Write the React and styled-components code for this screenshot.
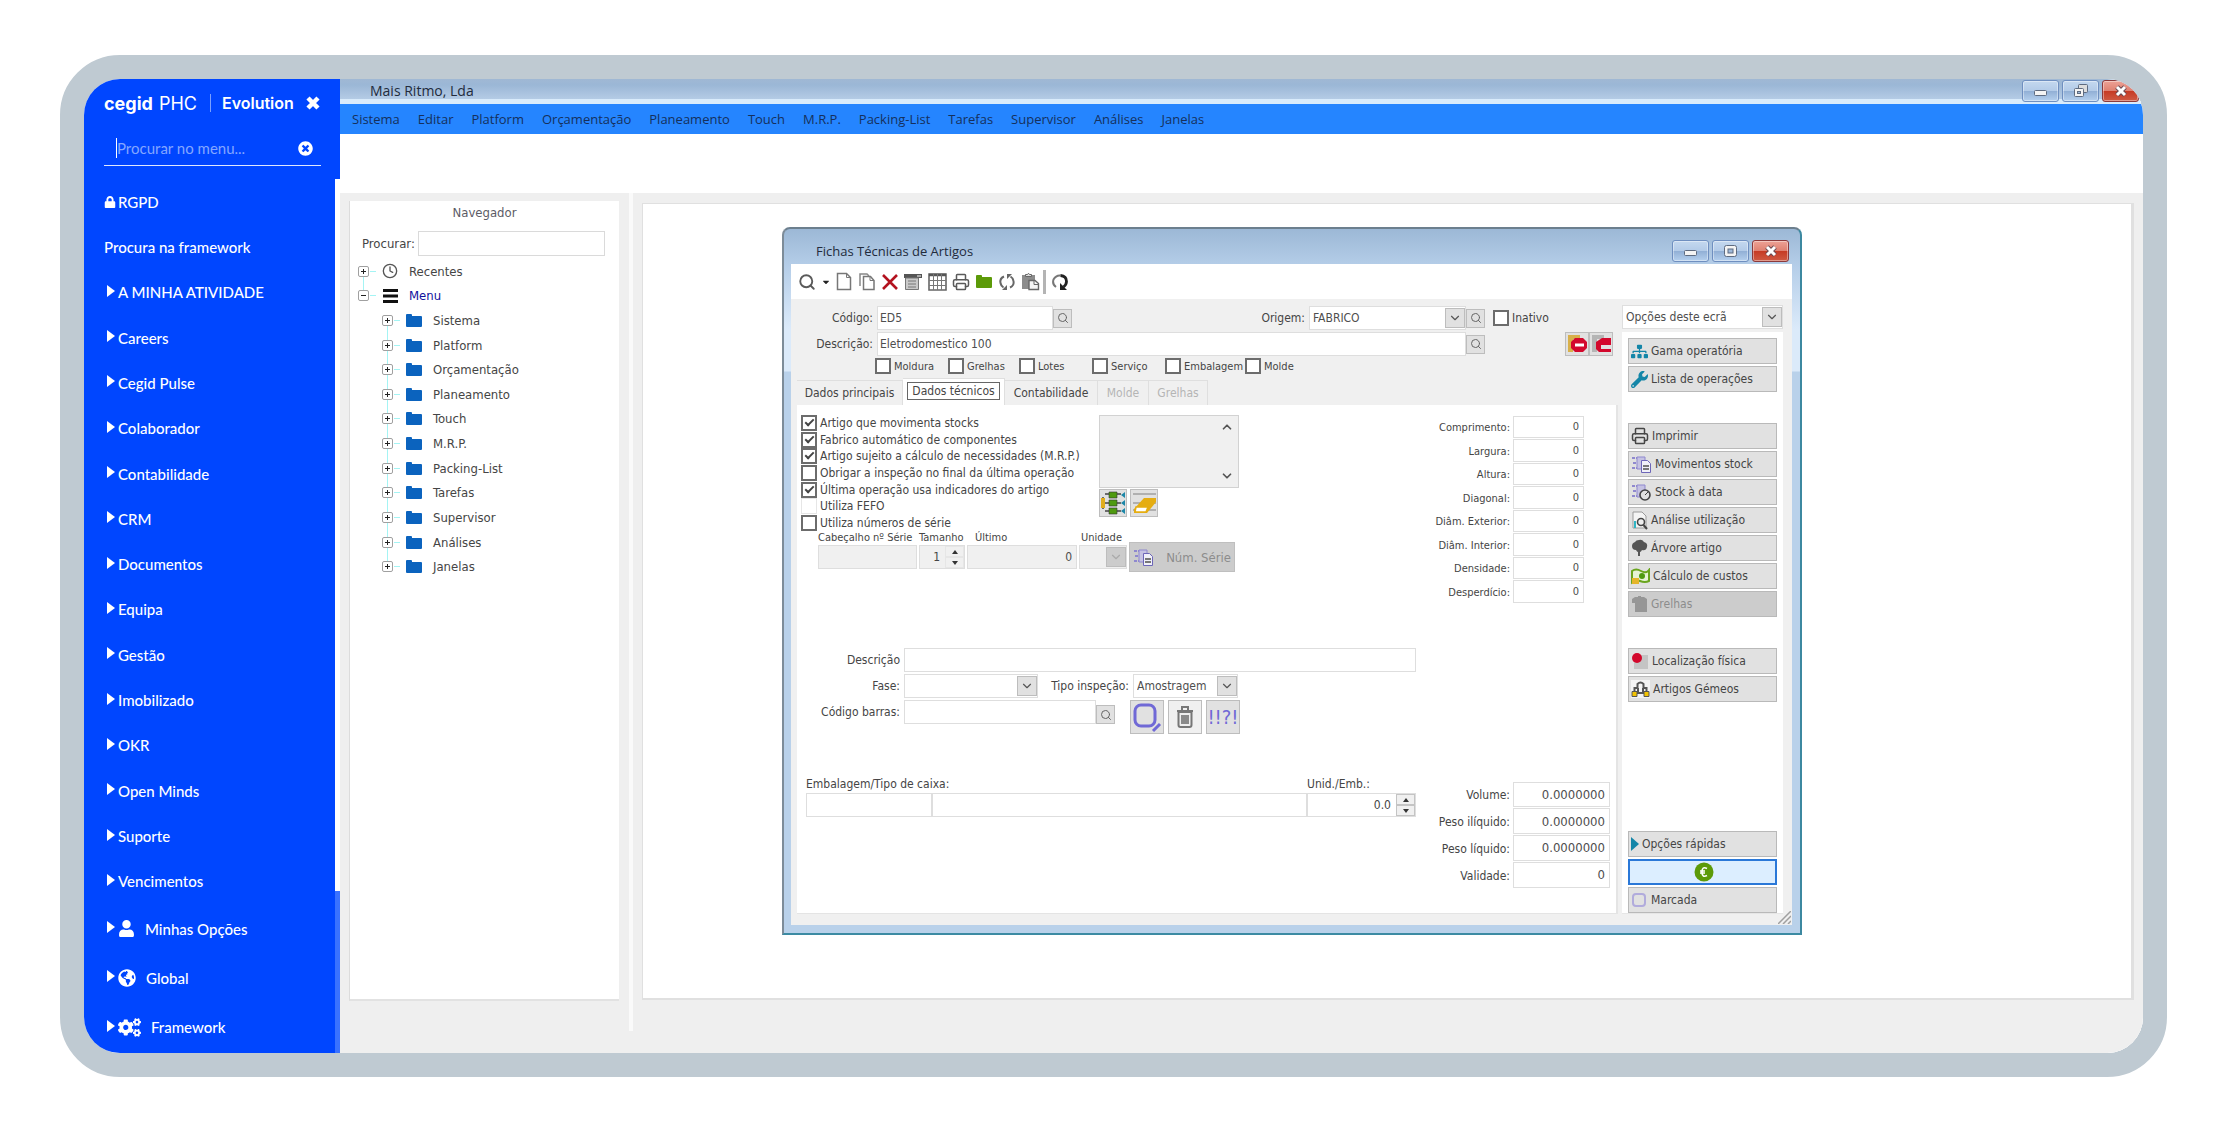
import { Fragment, useState } from "react";
import styled, { createGlobalStyle, css } from "styled-components";
import {
    FaLock, FaTimesCircle, FaUser, FaGlobeAmericas, FaCogs,
    FaSitemap, FaWrench, FaCaretDown
} from "react-icons/fa";
import { Search, Printer, Clock, ChevronDown, ChevronUp } from "lucide-react";

const GlobalStyle = createGlobalStyle`
    *, *::before, *::after{
        box-sizing: border-box;
    }

    body{
        margin: 0;
        background: #fff;
        font-family: "DejaVu Sans Condensed", "DejaVu Sans", sans-serif;
        font-size: 13px;
        color: #454545;
    }

    button, input, select, textarea{
        font: inherit;
        color: inherit;
        margin: 0;
        padding: 0;
        border: 0;
        border-radius: 0;
        background: none;
    }

    ul{
        list-style: none;
        margin: 0;
        padding: 0;
    }

    svg{
        display: block;
        flex-shrink: 0;
    }
`;

/* ---------- frame ---------- */

const Page = styled.div`
    display: flex;
    min-height: 100vh;
    padding: 55px 61px 55px 60px;
`;

const Frame = styled.div`
    flex: 1;
    display: flex;
    border: 24px solid #bfcad2;
    border-radius: 60px;
    overflow: hidden;
    min-width: 0;
`;

/* ---------- side menu ---------- */

const Side = styled.aside`
    flex: 0 0 256px;
    min-width: 0;
    display: flex;
    flex-direction: column;
    background: #0046ff;
    color: #fff;
    font-family: Lato, sans-serif;
`;

const SideHead = styled.div`
    height: 100px;
    padding: 8px 14px 0 20px;
`;

const Brand = styled.div`
    display: flex;
    align-items: center;
    height: 32px;
    font-family: Inter, sans-serif;
    font-size: 18px;
    font-weight: 400;

    b{
        font-weight: 700;
        margin-right: 6px;
    }
`;

const Product = styled.span`
    margin-left: 13px;
    padding: 0 12px 0 11px;
    border-left: 1px solid #7aa0ff;
    font-size: 16px;
    font-weight: 600;
    line-height: 18px;
`;

const IconButton = styled.button.attrs({type: 'button'})`
    display: flex;
    color: #fff;
`;

const SideSearch = styled.div`
    display: flex;
    align-items: center;
    justify-content: space-between;
    height: 35px;
    margin-top: 12px;
    margin-right: 5px;
    padding: 0 8px 0 12px;
    border-bottom: 1px solid #dfe8ff;

    input{
        flex: 1;
        min-width: 0;
        height: 20px;
        border-left: 1px solid #fff;
        font-size: 15px;
        outline: none;
    }

    input::placeholder{
        color: #84a6ff;
    }
`;

const SideBody = styled.div`
    flex: 1;
    display: flex;
`;

const SideList = styled.ul`
    flex: 1;
    display: grid;
    grid-template-rows: repeat(16, 45fr) repeat(3, 49fr);
    max-height: 873px;
`;

const SideItem = styled.li`
    display: flex;
    align-items: center;
    padding-left: ${({plain}) => plain ? 20 : 23}px;
`;

const SideLink = styled.a`
    display: flex;
    align-items: center;
    column-gap: ${({wide}) => wide ? 10 : 2}px;
    color: inherit;
    font-size: 15px;
    font-weight: 500;
    text-decoration: none;
`;

const Arrow = styled.span`
    margin: 0 3px 3px 0;
    border-left: 8px solid #fff;
    border-top: 6px solid transparent;
    border-bottom: 6px solid transparent;
`;

const SideScroll = styled.div`
    width: 5px;
    background: linear-gradient(#fff 712px, #3a72ff 712px);
`;

/* ---------- main application ---------- */

const Main = styled.main`
    flex: 1;
    min-width: 0;
    display: flex;
    flex-direction: column;
    background: #fff;
`;

const TitleBar = styled.header`
    display: flex;
    align-items: center;
    justify-content: space-between;
    height: 25px;
    padding: 3px 4px 0 30px;
    border-bottom: 5px solid #d9ebfb;
    background: linear-gradient(#a0b8d4, #9bb7d6 30%, #b4cbe5);
    font-family: "Open Sans", sans-serif;
    font-size: 14px;
    color: #222b3c;
`;

const WinButtons = styled.div`
    display: flex;
    column-gap: 3px;
`;

const WinButton = styled.button.attrs({type: 'button'})`
    display: flex;
    align-items: center;
    justify-content: center;
    width: 37px;
    height: 22px;
    border: 1px solid ${({close}) => close ? '#8b3a3c' : '#6f8fc0'};
    border-radius: 3px;
    background: ${({close}) => close
        ? 'linear-gradient(#eda295, #df8172 48%, #c63b25 52%, #cf5a43)'
        : 'linear-gradient(#c4d8ef, #b3cbe8 48%, #92b0d6 52%, #b5d0ee)'};
    box-shadow: inset 0 0 0 1px rgba(255, 255, 255, .4);
`;

const MenuBar = styled.nav`
    display: flex;
    align-items: center;
    column-gap: 18px;
    height: 30px;
    padding-left: 12px;
    background: #2585ff;
    font-family: "Open Sans", sans-serif;
    font-size: 13px;

    a{
        color: #15305c;
        text-decoration: none;
    }
`;

const ToolStrip = styled.div`
    height: 59px;
`;

const Desk = styled.div`
    flex: 1;
    display: flex;
    background: #efefef;
`;

const Navigator = styled.section`
    width: 270px;
    margin: 8px 0 52px 9px;
    border-left: 1px solid #dcdcdc;
    border-bottom: 2px solid #e2e2e2;
    background: #fff;
`;

const NavTitle = styled.h2`
    margin: 0;
    font-size: 13px;
    font-weight: 400;
    line-height: 24px;
    text-align: center;
    color: #5c5c66;
`;

const NavSearch = styled.div`
    display: flex;
    align-items: center;
    column-gap: 3px;
    padding: 6px 14px 3px 12px;

    input{
        flex: 1;
        min-width: 0;
        height: 25px;
        border: 1px solid #dadada;
    }
`;

const Tree = styled.ul`
    display: grid;
    grid-template-rows: repeat(13, 1fr);
    height: 320px;
    padding-left: 8px;
`;

const TreeRow = styled.li`
    display: grid;
    grid-template-columns: 12px 6px 28px 1fr;
    align-items: center;
    padding-left: ${({level}) => level ? 24 : 0}px;
    color: ${({active}) => active ? '#10109c' : 'inherit'};

    svg{
        justify-self: center;
    }
`;

const TreeName = styled.span`
    padding-left: 5px;
`;

const Expander = styled.button.attrs({type: 'button'})`
    position: relative;
    width: 11px;
    height: 11px;
    border: 1px solid #a0a0a0;
    border-radius: 2px;
    background:
        linear-gradient(#222, #222) center / 5px 1px no-repeat,
        linear-gradient(#222, #222) center / ${({open}) => open ? '0 0' : '1px 5px'} no-repeat,
        #fff;

    /* tree guide running down to the next row */
    &::after{
        content: "";
        position: absolute;
        display: ${({last}) => last ? 'none' : 'block'};
        left: 4px;
        top: 10px;
        width: 1px;
        height: 14px;
        background: #a4f4f4;
    }
`;

const Guide = styled.span`
    width: 6px;
    height: 1px;
    background: #a4f4f4;
`;

const Splitter = styled.div`
    width: 4px;
    margin: 0 9px 22px 10px;
    background: #fafafa;
`;

const Workspace = styled.div`
    position: relative;
    flex: 1;
    margin: 10px 9px 53px 0;
    border: 1px solid #e0e0e0;
    border-right-width: 3px;
    border-bottom-width: 2px;
    background: #fff;
`;

/* ---------- MDI window ---------- */

const Window = styled.section`
    position: absolute;
    left: 139px;
    top: 23px;
    width: 1020px;
    height: 708px;
    display: flex;
    flex-direction: column;
    padding: 0 8px 8px 7px;
    border: 2px solid #5d7586;
    border-color: #6c7f8e #3c88a0 #3c8ba3 #7d8c99;
    border-radius: 8px 8px 0 0;
    background: linear-gradient(#9cb8d6, #b4cde8 36px, #dbeafa 100px, #dbeafa 142px, #b9d1ea 143px);
    font-size: 12px;
`;

const WindowTitle = styled.div`
    display: flex;
    align-items: center;
    justify-content: space-between;
    height: 35px;
    padding: 8px 3px 0 25px;
    font-family: "Open Sans", sans-serif;
    color: #222b3c;

    h1{
        margin: 0;
        font-size: 13px;
        font-weight: 400;
    }
`;

const Toolbar = styled.div`
    display: flex;
    align-items: center;
    column-gap: 5px;
    height: 35px;
    padding-left: 7px;
    background: #fff;

    button{
        display: flex;
        color: #5a5a5a;
    }
`;

const ToolSeparator = styled.span`
    width: 3px;
    height: 24px;
    margin: 0 0 0 -2px;
    background: #b4b4b4;
`;

const WindowBody = styled.div`
    flex: 1;
    display: flex;
    column-gap: 4px;
    padding: 6px 9px 11px 6px;
    background: #f0f0f0;
`;

const FormSide = styled.div`
    flex: 1;
    display: flex;
    flex-direction: column;
`;

const HeadRow = styled.div`
    display: flex;
    align-items: center;
    height: 26px;
`;

const HeadLabel = styled.label`
    width: ${({width}) => width}px;
    padding-right: 4px;
    text-align: right;
`;

const TextInput = styled.input`
    width: ${({width}) => width ? width + 'px' : 'auto'};
    flex: ${({width}) => width ? '0 0 auto' : '1'};
    min-width: 0;
    height: 24px;
    padding: 0 4px 0 2px;
    border: 1px solid #dedede;
    background: ${({disabled}) => disabled ? '#f0f0f0' : '#fff'};
    text-align: ${({number}) => number ? 'right' : 'left'};
    color: #4e4e4e;
`;

const SquareButton = styled.button.attrs({type: 'button'})`
    display: flex;
    align-items: center;
    justify-content: center;
    width: ${({size}) => size || 19}px;
    height: ${({size}) => size || 19}px;
    border: 1px solid #bdbdbd;
    background: ${({light}) => light ? '#f0f0f0' : '#e1e1e1'};
    color: #666;
`;

const SelectBox = styled.div`
    display: grid;
    grid-template-columns: 1fr 20px;
    align-items: center;
    width: ${({width}) => width ? width + 'px' : 'auto'};
    height: 24px;
    border: 1px solid #dedede;
    background: ${({off}) => off ? '#f0f0f0' : '#fff'};

    select{
        grid-area: 1 / 1 / 2 / 3;
        width: 100%;
        height: 22px;
        padding-left: 3px;
        appearance: none;
        opacity: 1;
        color: #4e4e4e;
    }
`;

const SelectArrow = styled.span`
    grid-area: 1 / 2;
    display: flex;
    align-items: center;
    justify-content: center;
    height: 20px;
    border: 1px solid #bdbdbd;
    background: ${({off}) => off ? '#ccc' : '#e1e1e1'};
    color: ${({off}) => off ? '#aaa' : '#555'};
    pointer-events: none;
`;

const Check = styled.label`
    display: flex;
    align-items: center;
    column-gap: 3px;
    font-size: ${({small}) => small ? 11 : 12}px;
    white-space: nowrap;

    input{
        display: grid;
        place-items: center;
        flex: 0 0 auto;
        width: 16px;
        height: 16px;
        appearance: none;
        border: 2px solid #6c6c6c;
        background: #fff;
    }

    input:disabled{
        border: 1px solid #e6e6e6;
    }

    input:checked::after{
        content: "";
        width: 9px;
        height: 5px;
        margin-top: -3px;
        border: solid #444;
        border-width: 0 0 2px 2px;
        transform: rotate(-45deg);
    }
`;

const Inactive = styled(Check)`
    margin-left: 8px;
`;

const StopButtons = styled.div`
    display: flex;
    margin-left: auto;
    margin-right: 5px;
`;

const CheckRow = styled.div`
    display: grid;
    grid-template-columns: 73px 71px 73px 73px 80px 60px;
    align-items: center;
    height: 18px;
    margin: 0 0 3px 78px;
`;

const Tabs = styled.div`
    display: flex;
    align-items: flex-end;
    height: 27px;
`;

const Tab = styled.button.attrs({type: 'button', role: 'tab'})`
    width: ${({width}) => width}px;
    height: 25px;
    border: 1px solid #dfdfdf;
    border-width: 1px 1px 0 0;
    white-space: nowrap;

    &:disabled{
        color: #b5b5b5;
    }

    ${({active}) => active && css`
        height: 27px;
        padding: 3px 4px 5px;
        background: #fff;

        span{
            display: block;
            border: 1px solid #666;
            line-height: 16px;
        }
    `}
`;

const Panel = styled.div`
    flex: 1;
    display: flex;
    justify-content: space-between;
    padding: 10px 3px 25px 4px;
    border-right: 2px solid #e4e4e4;
    border-bottom: 1px solid #e4e4e4;
    background: #fff;
`;

const PanelLeft = styled.div`
    width: 615px;
    display: flex;
    flex-direction: column;
`;

const StockTop = styled.div`
    display: grid;
    grid-template-columns: 298px 140px;
    height: 116px;
`;

const CheckList = styled.div`
    display: grid;
    grid-template-rows: repeat(7, 1fr);
    height: 116px;
`;

const NoteBox = styled.div`
    display: flex;
    height: 73px;
    border: 1px solid #d2d2d2;
    background: #f0f0f0;

    textarea{
        flex: 1;
        min-width: 0;
        resize: none;
    }
`;

const NoteScroll = styled.div`
    display: flex;
    flex-direction: column;
    justify-content: space-between;
    width: 21px;
    padding: 4px 3px;
    color: #555;
`;

const ButtonPair = styled.div`
    display: flex;
    column-gap: 3px;
    margin-top: 1px;
`;

const SeriesRow = styled.div`
    display: flex;
    height: 38px;
    padding-left: 17px;
`;

const SeriesField = styled.div`
    display: grid;
    grid-template-rows: 14px 24px;
    width: ${({width}) => width}px;
    margin-right: 2px;

    label{
        font-size: 11px;
        line-height: 14px;
        padding-left: ${({inset}) => inset || 0}px;
        white-space: nowrap;
    }

    input{
        width: 100%;
    }
`;

const Spin = styled.div`
    display: flex;
    height: 24px;
    border: 1px solid #dedede;
    background: ${({off}) => off ? '#f0f0f0' : '#fff'};

    input{
        flex: 1;
        min-width: 0;
        height: 22px;
        padding-right: 5px;
        text-align: right;
    }
`;

const SpinButtons = styled.div`
    display: grid;
    grid-template-rows: 1fr 1fr;
    width: 19px;
    color: #333;

    button{
        display: grid;
        place-items: center;
        border: 1px solid ${({off}) => off ? '#e6e6e6' : '#c4c4c4'};
        background: #f0f0f0;
    }
`;

const SeriesButton = styled.button.attrs({type: 'button'})`
    display: flex;
    align-items: center;
    justify-content: space-between;
    width: 106px;
    height: 30px;
    margin-top: 11px;
    padding: 0 3px;
    border: 1px solid #bfbfbf;
    background: #ccc;
    font-size: 13px;

    &:disabled{
        color: #8c8c8c;
    }
`;

const InspectionGroup = styled.div`
    display: grid;
    row-gap: 1px;
    margin-top: 79px;
`;

const FieldRow = styled.div`
    display: flex;
    align-items: flex-start;
    min-height: 25px;

    > label{
        width: ${({labelWidth}) => labelWidth || 103}px;
        padding-right: 4px;
        line-height: 24px;
        text-align: right;
        white-space: nowrap;
    }
`;

const LookupField = styled.div`
    display: flex;
    align-items: flex-end;
`;

const ActionButtons = styled.div`
    display: flex;
    column-gap: 4px;
    margin-left: 15px;
`;

const MarkButton = styled(SquareButton)`
    font-size: 20px;
    color: #7069d6;
`;

const BoxGroup = styled.div`
    display: grid;
    grid-template-columns: 126px 375px 109px;
    margin-top: auto;
    padding: 0 0 71px 5px;

    label{
        line-height: 17px;
        white-space: nowrap;
    }

    label:first-child{
        grid-column: 1 / 3;
    }
`;

const PanelRight = styled.div`
    width: 184px;
    display: flex;
    flex-direction: column;
    justify-content: space-between;
`;

const Measures = styled.div`
    display: grid;
    grid-template-columns: 84px ${({inputWidth}) => inputWidth}px;
    grid-template-rows: repeat(${({rows}) => rows}, 1fr);
    align-items: center;
    height: ${({height}) => height}px;
    font-size: ${({small}) => small ? 11 : 12}px;

    label{
        padding: 2px 3px 0 0;
        text-align: right;
        white-space: nowrap;
    }

    input{
        height: calc(100% - 1px);
        font-size: ${({small}) => small ? 11 : 13}px;
    }
`;

/* ---------- options column ---------- */

const Options = styled.div`
    width: 161px;
    display: flex;
    flex-direction: column;
`;

const OptionList = styled.div`
    flex: 1;
    display: flex;
    flex-direction: column;
    row-gap: 2px;
    margin-top: 3px;
    padding: 6px 6px 0 6px;
    background: #fff;
    border-bottom: 1px solid #e6e6e6;
`;

const OptionButton = styled.button.attrs({type: 'button'})`
    display: flex;
    align-items: center;
    justify-content: ${({primary}) => primary ? 'center' : 'flex-start'};
    column-gap: 3px;
    height: 26px;
    padding-left: 2px;
    border: ${({primary}) => primary ? '2px solid #2a78d8' : '1px solid #b9b9b9'};
    background: ${({primary}) => primary ? '#dceeff' : '#e1e1e1'};
    white-space: nowrap;

    &:disabled{
        background: #ccc;
        color: #8c8c8c;
    }
`;

const OptionSpace = styled.div`
    flex: ${({grow}) => grow ? '1' : '0 0 27px'};
`;

const Grip = styled.svg`
    position: absolute;
    right: 9px;
    bottom: 9px;
`;

/* ---------- small drawings ---------- */

const CrossIcon = () => (
    <svg width="14" height="14" viewBox="0 0 14 14">
        <path d="M2 2 12 12M12 2 2 12" stroke="#fff" strokeWidth="4.5" />
    </svg>
);

const MinimizeIcon = () => (
    <svg width="15" height="12" viewBox="0 0 15 12">
        <rect x="1.5" y="5.5" width="12" height="5" rx="1" fill="#f4f4f4" stroke="#5e6b80" />
    </svg>
);

const MaximizeIcon = () => (
    <svg width="15" height="14" viewBox="0 0 15 14">
        <rect x="1.5" y="1.5" width="12" height="11" rx="2" fill="#f4f4f4" stroke="#5e6b80" />
        <rect x="5" y="5" width="5" height="4" fill="#9db8d9" stroke="#5e6b80" />
    </svg>
);

const RestoreIcon = () => (
    <svg width="18" height="15" viewBox="0 0 18 15">
        <rect x="6.5" y="1.5" width="9" height="8" rx="1" fill="#ddd" stroke="#5e6b80" />
        <rect x="2.5" y="5.5" width="9" height="8" rx="1" fill="#f4f4f4" stroke="#5e6b80" />
        <rect x="5.5" y="8.5" width="3" height="2" fill="#9db8d9" stroke="#5e6b80" />
    </svg>
);

const CloseIcon = () => (
    <svg width="14" height="12" viewBox="0 0 14 12">
        <path d="M3 2 11 10M11 2 3 10" stroke="#6b4a52" strokeWidth="5" />
        <path d="M3 2 11 10M11 2 3 10" stroke="#fff" strokeWidth="3" />
    </svg>
);

const MenuIcon = () => (
    <svg width="15" height="14" viewBox="0 0 15 14">
        <path d="M0 1.5h15M0 7h15M0 12.5h15" stroke="#111" strokeWidth="3" />
    </svg>
);

const FolderIcon = ({color = '#0b63be'}) => (
    <svg width="18" height="15" viewBox="0 0 18 15">
        <path d="M1 2q0-1 1-1h4q1 0 1 1v1h9q1 0 1 1v9q0 1-1 1H2q-1 0-1-1z" fill={color} />
    </svg>
);

const FileIcon = () => (
    <svg width="17" height="19" viewBox="0 0 17 19">
        <path d="M1.500 1.500h9l4 4v12h-13z" fill="#fff" stroke="#777" strokeWidth="1.5" />
        <path d="M10.500 1.500v4h4" fill="none" stroke="#777" />
    </svg>
);

const CopyIcon = () => (
    <svg width="18" height="19" viewBox="0 0 18 19">
        <path d="M2 14V2h7l2 2" fill="none" stroke="#888" strokeWidth="1.5" />
        <path d="M5.500 4.500h7l3.500 4v9H5.500z" fill="#fff" stroke="#777" strokeWidth="1.5" />
        <path d="M12 4.500v4h4" fill="none" stroke="#777" />
    </svg>
);

const DeleteIcon = () => (
    <svg width="18" height="18" viewBox="0 0 18 18">
        <path d="M2 2 16 16M16 2 2 16" stroke="#b3121f" strokeWidth="2.6" />
    </svg>
);

const FormIcon = () => (
    <svg width="19" height="18" viewBox="0 0 19 18">
        <path d="M0 1h18v4H0z" fill="#555" />
        <path d="M1.500 5h13v11.500h-13z" fill="#c9c9c9" stroke="#777" />
        <path d="M4 8h8M4 11h8M4 14h8" stroke="#777" />
        <path d="M13 3h4" stroke="#fff" />
    </svg>
);

const GridIcon = () => (
    <svg width="19" height="18" viewBox="0 0 19 18">
        <path d="M1 1h17v16H1z" fill="#fff" stroke="#666" strokeWidth="1.6" />
        <path d="M1 2h17" stroke="#555" strokeWidth="2.5" />
        <path d="M1 7.500h17M1 12.500h17M5.500 1v16M9.500 1v16M13.500 1v16" stroke="#777" />
    </svg>
);

const SyncIcon = () => (
    <svg width="18" height="18" viewBox="0 0 18 18">
        <path d="M6 3.500Q1.500 5.500 2.500 10q.5 3 3 4.500M12 14.500q4.500-2 3.500-6.500-.5-3-3-4.500" fill="none" stroke="#666" strokeWidth="2" />
        <path d="M4 17h5v-5zM14 1H9v5z" fill="#666" />
    </svg>
);

const PasteIcon = () => (
    <svg width="19" height="19" viewBox="0 0 19 19">
        <path d="M1 3h13v14H1z" fill="#8c8c8c" />
        <path d="M4.500 4.500v-2h2q1-2.500 2 0h2v2z" fill="#ddd" stroke="#666" />
        <path d="M8 8.500h6l3.500 3v6H8z" fill="#f4f4f4" stroke="#666" strokeWidth="1.4" />
        <path d="M13 8.500v4h4" fill="none" stroke="#666" />
    </svg>
);

const RedoIcon = () => (
    <svg width="18" height="18" viewBox="0 0 18 18">
        <path d="M5 14Q1 11 2.500 6.500 5 2 9.500 2.500" fill="none" stroke="#777" strokeWidth="2" />
        <path d="M9.500 2.500q6 .5 6 6 0 3-3 5.500" fill="none" stroke="#222" strokeWidth="2.8" />
        <path d="M9 10v7h7z" fill="#222" />
    </svg>
);

const StopIcon = ({cut}) => (
    <svg width="22" height="20" viewBox="0 0 22 20">
        <path d="M2 1h12v4H7v13H2z" fill={cut ? '#b5b5b5' : '#d8b04a'} />
        {cut
            ? <path d="M21 4h-9L6 8v7l3 3h12v-3H11v-4h10z" fill="#d3082c" />
            : <path d="M9 4h8l4 4v6l-4 4H9l-4-4V8z" fill="#d3082c" />}
        {!cut && <path d="M9 9.500h9v3H9z" fill="#fff" />}
    </svg>
);

const TruckIcon = ({kind}) => (
    <svg width="21" height="19" viewBox="0 0 21 19">
        <path d="M1 3h6M2 8h4M1 13h6" stroke="#8f88cf" strokeWidth="2" strokeDasharray="3 1" />
        <path d="M6 2h8v12H6z" fill="#c5c2e2" stroke="#8f88cf" />
        {kind === 'clock'
            ? <><circle cx="14" cy="12" r="5" fill="#e1e1e1" stroke="#444" strokeWidth="1.6" /><path d="M14 12l3-3" stroke="#444" /></>
            : <path d="M10.500 5.500h6l3 3v9h-9z" fill="#f0f0f8" stroke="#6d66b8" />}
        {kind !== 'clock' && <path d="M12 11h6M12 14h6" stroke="#777" strokeWidth="2" />}
    </svg>
);

const ReportIcon = () => (
    <svg width="17" height="19" viewBox="0 0 17 19">
        <path d="M2 1h9l4 4v12H2z" fill="#f4f4f4" stroke="#999" />
        <path d="M3 10h2v7H3z" fill="#2fb5c4" />
        <circle cx="10" cy="11" r="3.500" fill="#eee" stroke="#444" strokeWidth="1.6" />
        <path d="M12.500 14l3.500 4" stroke="#444" strokeWidth="2" />
    </svg>
);

const TreeIcon = () => (
    <svg width="17" height="18" viewBox="0 0 17 18">
        <path d="M8 1q3-1 5 2 4 1 3 5-1 4-5 3-1 2-2 2v4H7v-4q-1 0-2-2-4 0-4-4 0-3 3-4 1-2 4-2z" fill="#555" />
    </svg>
);

const MoneyIcon = () => (
    <svg width="19" height="17" viewBox="0 0 19 17">
        <path d="M1 3q4-3 9 0t8-1v11q-4 2-9 0t-8 1z" fill="#e6f3d4" stroke="#6aa51e" strokeWidth="2" />
        <circle cx="11" cy="8" r="3" fill="#4f9a10" />
        <path d="M1 10h7v6H1z" fill="#e5b52a" />
    </svg>
);

const GridOffIcon = () => (
    <svg width="17" height="18" viewBox="0 0 17 18">
        <path d="M1 4l3-2h3V1h3v1h3l3 2v13H4V8H1z" fill="#969696" />
    </svg>
);

const PlaceIcon = () => (
    <svg width="18" height="18" viewBox="0 0 18 18">
        <path d="M3 3h14v14H3z" fill="#c4c4c4" />
        <circle cx="6" cy="6" r="5" fill="#d3082c" />
    </svg>
);

const TwinsIcon = () => (
    <svg width="19" height="18" viewBox="0 0 19 18">
        <path d="M0 0h19v18H0z" fill="#f4f4f4" />
        <path d="M3.500 11V8h3V4q3-3 6 0v4h3v3M7 8v5h5V8" fill="none" stroke="#555" strokeWidth="2" />
        <path d="M1 11.500h5v5H1zM13 11.500h5v5h-5z" fill="#f2c200" stroke="#555" />
    </svg>
);

const FlowIcon = () => (
    <svg width="26" height="26" viewBox="0 0 26 26">
        <path d="M3 7v12M3 13h18M5 4h16M5 21h16" stroke="#444" strokeWidth="1.5" />
        <path d="M1 8h4v10H1z" fill="#e0ad1c" />
        <path d="M9 2h8v6H9zM9 10h8v6H9zM9 18h8v6H9z" fill="#4f9a10" stroke="#333" strokeWidth=".6" />
        <path d="M25 2v6l-4-3zM25 10v6l-4-3zM25 18v6l-4-3z" fill="#1d87a8" />
    </svg>
);

const EraserIcon = () => (
    <svg width="25" height="26" viewBox="0 0 25 26">
        <path d="M1 4h23M1 13h23M1 20h23" stroke="#b0b0b0" strokeWidth="2" />
        <path d="M12 8h12v4L15 23H2v-4z" fill="#e5ad12" />
        <path d="M7 14h10M4 17l-1 5h11l2-5z" fill="#fff" stroke="#e5ad12" strokeWidth="1.5" />
    </svg>
);

const ShapeIcon = () => (
    <svg width="30" height="31" viewBox="0 0 30 31">
        <rect x="3" y="3" width="20" height="21" rx="6" fill="none" stroke="#7069d6" strokeWidth="3" />
        <path d="M21 29l7-7" stroke="#7069d6" strokeWidth="3" />
    </svg>
);

const TrashIcon = () => (
    <svg width="20" height="24" viewBox="0 0 20 24">
        <path d="M7 5V2h6v3M2 6h16" fill="none" stroke="#777" strokeWidth="2" />
        <path d="M3.500 7h13v13q0 2-2 2h-9q-2 0-2-2z" fill="#eee" stroke="#777" strokeWidth="2" />
        <path d="M6 10h8v9H6z" fill="#8a8a8a" />
    </svg>
);

const EuroIcon = () => (
    <svg width="20" height="20" viewBox="0 0 20 20">
        <circle cx="10" cy="10" r="9.500" fill="#5c9a08" />
        <path d="M13 6.500Q8 4 8 10t5 3.500M6 9h5M6 11h5" fill="none" stroke="#fff" strokeWidth="1.6" />
    </svg>
);

const SpinArrow = ({down}) => (
    <svg width="6" height="4" viewBox="0 0 6 4">
        <path d={down ? 'M0 0h6L3 4z' : 'M0 4h6L3 0z'} fill="currentColor" />
    </svg>
);

/* ---------- data ---------- */

const sideItems = [
    {name: 'RGPD', plain: true, icon: <FaLock size={12} />},
    {name: 'Procura na framework', plain: true},
    ...['A MINHA ATIVIDADE', 'Careers', 'Cegid Pulse', 'Colaborador', 'Contabilidade', 'CRM',
        'Documentos', 'Equipa', 'Gestão', 'Imobilizado', 'OKR', 'Open Minds', 'Suporte',
        'Vencimentos'].map(name => ({name})),
    {name: 'Minhas Opções', icon: <FaUser size={17} />, wide: true},
    {name: 'Global', icon: <FaGlobeAmericas size={18} />, wide: true},
    {name: 'Framework', icon: <FaCogs size={23} />, wide: true},
];

const modules = ['Sistema', 'Platform', 'Orçamentação', 'Planeamento', 'Touch', 'M.R.P.',
    'Packing-List', 'Tarefas', 'Supervisor', 'Análises', 'Janelas'];

const menuItems = ['Sistema', 'Editar', ...modules.slice(1)];

const kinds = ['Moldura', 'Grelhas', 'Lotes', 'Serviço', 'Embalagem', 'Molde'];

const tabs = [
    {name: 'Dados principais', width: 106},
    {name: 'Dados técnicos', width: 102},
    {name: 'Contabilidade', width: 93},
    {name: 'Molde', width: 51, disabled: true},
    {name: 'Grelhas', width: 59, disabled: true},
];

const stockChecks = [
    {name: 'Artigo que movimenta stocks', on: true},
    {name: 'Fabrico automático de componentes', on: true},
    {name: 'Artigo sujeito a cálculo de necessidades (M.R.P.)', on: true},
    {name: 'Obrigar a inspeção no final da última operação'},
    {name: 'Última operação usa indicadores do artigo', on: true},
    {name: 'Utiliza FEFO', disabled: true},
    {name: 'Utiliza números de série'},
];

const sizes = ['Comprimento:', 'Largura:', 'Altura:', 'Diagonal:', 'Diâm. Exterior:',
    'Diâm. Interior:', 'Densidade:', 'Desperdício:'];

const weights = [
    ['Volume:', '0.0000000'],
    ['Peso ilíquido:', '0.0000000'],
    ['Peso líquido:', '0.0000000'],
    ['Validade:', '0'],
];

/* ---------- components ---------- */

function Select({id, width, value, off, label}) {
    return (
        <SelectBox width={width} off={off}>
            <select id={id} aria-label={label} disabled={off} defaultValue={value}>
                <option value={value}>{value}</option>
            </select>
            <SelectArrow off={off}><ChevronDown size={14} /></SelectArrow>
        </SelectBox>
    );
}

function SideMenu() {
    return (
        <Side>
            <SideHead>
                <Brand>
                    <b>cegid</b>PHC
                    <Product>Evolution</Product>
                    <IconButton aria-label="Fechar menu"><CrossIcon /></IconButton>
                </Brand>
                <SideSearch>
                    <input type="text" aria-label="Procurar no menu" placeholder="Procurar no menu..." />
                    <IconButton aria-label="Limpar"><FaTimesCircle size={15} /></IconButton>
                </SideSearch>
            </SideHead>
            <SideBody>
                <SideList>
                    {sideItems.map(item => (
                        <SideItem key={item.name} plain={item.plain}>
                            {!item.plain && <Arrow />}
                            <SideLink href="#" wide={item.wide}>{item.icon}{item.name}</SideLink>
                        </SideItem>
                    ))}
                </SideList>
                <SideScroll />
            </SideBody>
        </Side>
    );
}

function NavigatorPanel() {
    return (
        <Navigator>
            <NavTitle>Navegador</NavTitle>
            <NavSearch>
                <label htmlFor="nav-search">Procurar:</label>
                <input id="nav-search" type="text" />
            </NavSearch>
            <Tree>
                <TreeRow>
                    <Expander aria-label="Recentes" /><Guide /><Clock size={16} color="#555" />
                    <TreeName>Recentes</TreeName>
                </TreeRow>
                <TreeRow active>
                    <Expander aria-label="Menu" open last /><Guide /><MenuIcon />
                    <TreeName>Menu</TreeName>
                </TreeRow>
                {modules.map((name, i) => (
                    <TreeRow key={name} level={1}>
                        <Expander aria-label={name} last={i === modules.length - 1} /><Guide /><FolderIcon />
                        <TreeName>{name}</TreeName>
                    </TreeRow>
                ))}
            </Tree>
        </Navigator>
    );
}

function TechnicalPanel() {
    return (
        <Panel>
            <PanelLeft>
                <StockTop>
                    <CheckList>
                        {stockChecks.map(item => (
                            <Check key={item.name}>
                                <input type="checkbox" defaultChecked={item.on} disabled={item.disabled} />
                                {item.name}
                            </Check>
                        ))}
                    </CheckList>
                    <div>
                        <NoteBox>
                            <textarea aria-label="Notas" readOnly />
                            <NoteScroll><ChevronUp size={14} strokeWidth={3} /><ChevronDown size={14} strokeWidth={3} /></NoteScroll>
                        </NoteBox>
                        <ButtonPair>
                            <SquareButton size={28} aria-label="Fluxo"><FlowIcon /></SquareButton>
                            <SquareButton size={28} aria-label="Limpar"><EraserIcon /></SquareButton>
                        </ButtonPair>
                    </div>
                </StockTop>
                <SeriesRow>
                    <SeriesField width={99}>
                        <label htmlFor="serie-head">Cabeçalho nº Série</label>
                        <TextInput id="serie-head" disabled />
                    </SeriesField>
                    <SeriesField width={46}>
                        <label htmlFor="serie-size">Tamanho</label>
                        <Spin off>
                            <input id="serie-size" defaultValue="1" />
                            <SpinButtons off>
                                <button type="button" aria-label="Mais"><SpinArrow /></button>
                                <button type="button" aria-label="Menos"><SpinArrow down /></button>
                            </SpinButtons>
                        </Spin>
                    </SeriesField>
                    <SeriesField width={110} inset={8}>
                        <label htmlFor="serie-last">Último</label>
                        <TextInput id="serie-last" disabled number defaultValue="0" />
                    </SeriesField>
                    <SeriesField width={48} inset={2}>
                        <label htmlFor="serie-unit">Unidade</label>
                        <Select id="serie-unit" off value="" />
                    </SeriesField>
                    <SeriesButton disabled><TruckIcon />Núm. Série</SeriesButton>
                </SeriesRow>
                <InspectionGroup>
                    <FieldRow>
                        <label htmlFor="insp-desc">Descrição</label>
                        <TextInput id="insp-desc" width={512} />
                    </FieldRow>
                    <FieldRow>
                        <label htmlFor="insp-phase">Fase:</label>
                        <Select id="insp-phase" width={134} value="" />
                        <FieldRow labelWidth={95}>
                            <label htmlFor="insp-type">Tipo inspeção:</label>
                            <Select id="insp-type" width={105} value="Amostragem" />
                        </FieldRow>
                    </FieldRow>
                    <FieldRow>
                        <label htmlFor="insp-code">Código barras:</label>
                        <LookupField>
                            <TextInput id="insp-code" width={192} />
                            <SquareButton aria-label="Procurar código"><Search size={12} /></SquareButton>
                        </LookupField>
                        <ActionButtons>
                            <SquareButton size={34} aria-label="Forma"><ShapeIcon /></SquareButton>
                            <SquareButton size={34} light aria-label="Apagar"><TrashIcon /></SquareButton>
                            <MarkButton size={34}>!!?!</MarkButton>
                        </ActionButtons>
                    </FieldRow>
                </InspectionGroup>
                <BoxGroup>
                    <label htmlFor="box-type">Embalagem/Tipo de caixa:</label>
                    <label htmlFor="box-units">Unid./Emb.:</label>
                    <TextInput id="box-type" />
                    <TextInput aria-label="Nome da caixa" />
                    <Spin>
                        <input id="box-units" defaultValue="0.0" />
                        <SpinButtons>
                            <button type="button" aria-label="Mais"><SpinArrow /></button>
                            <button type="button" aria-label="Menos"><SpinArrow down /></button>
                        </SpinButtons>
                    </Spin>
                </BoxGroup>
            </PanelLeft>
            <PanelRight>
                <Measures rows={8} height={188} inputWidth={71} small>
                    {sizes.map((name, i) => (
                        <Fragment key={name}>
                            <label htmlFor={'size-' + i}>{name}</label>
                            <TextInput id={'size-' + i} number defaultValue="0" />
                        </Fragment>
                    ))}
                </Measures>
                <Measures rows={4} height={107} inputWidth={97}>
                    {weights.map(([name, value], i) => (
                        <Fragment key={name}>
                            <label htmlFor={'weight-' + i}>{name}</label>
                            <TextInput id={'weight-' + i} number defaultValue={value} />
                        </Fragment>
                    ))}
                </Measures>
            </PanelRight>
        </Panel>
    );
}

function OptionsColumn() {
    return (
        <Options>
            <Select label="Opções" value="Opções deste ecrã" />
            <OptionList>
                <OptionButton><FaSitemap size={17} color="#1486a8" />Gama operatória</OptionButton>
                <OptionButton><FaWrench size={17} color="#1486a8" />Lista de operações</OptionButton>
                <OptionSpace />
                <OptionButton><Printer size={18} />Imprimir</OptionButton>
                <OptionButton><TruckIcon />Movimentos stock</OptionButton>
                <OptionButton><TruckIcon kind="clock" />Stock à data</OptionButton>
                <OptionButton><ReportIcon />Análise utilização</OptionButton>
                <OptionButton><TreeIcon />Árvore artigo</OptionButton>
                <OptionButton><MoneyIcon />Cálculo de custos</OptionButton>
                <OptionButton disabled><GridOffIcon />Grelhas</OptionButton>
                <OptionSpace />
                <OptionButton><PlaceIcon />Localização física</OptionButton>
                <OptionButton><TwinsIcon />Artigos Gémeos</OptionButton>
                <OptionSpace grow />
                <OptionButton>
                    <svg width="8" height="14" viewBox="0 0 8 14"><path d="M0 0 8 7 0 14z" fill="#1486a8" /></svg>
                    Opções rápidas
                </OptionButton>
                <OptionButton primary aria-label="Custos"><EuroIcon /></OptionButton>
                <OptionButton>
                    <svg width="17" height="16" viewBox="0 0 17 16"><rect x="2" y="2" width="12" height="12" rx="3" fill="none" stroke="#b1abdc" strokeWidth="2" /></svg>
                    Marcada
                </OptionButton>
            </OptionList>
        </Options>
    );
}

function ArticleWindow() {

    let [tab, setTab] = useState('Dados técnicos');

    return (
        <Window>
            <WindowTitle>
                <h1>Fichas Técnicas de Artigos</h1>
                <WinButtons>
                    <WinButton aria-label="Minimizar"><MinimizeIcon /></WinButton>
                    <WinButton aria-label="Maximizar"><MaximizeIcon /></WinButton>
                    <WinButton aria-label="Fechar" close><CloseIcon /></WinButton>
                </WinButtons>
            </WindowTitle>
            <Toolbar>
                <button type="button" aria-label="Procurar"><Search size={18} strokeWidth={2.5} /></button>
                <button type="button" aria-label="Mais pesquisas"><FaCaretDown size={10} color="#222" /></button>
                <button type="button" aria-label="Novo"><FileIcon /></button>
                <button type="button" aria-label="Duplicar"><CopyIcon /></button>
                <button type="button" aria-label="Eliminar"><DeleteIcon /></button>
                <button type="button" aria-label="Formulário"><FormIcon /></button>
                <button type="button" aria-label="Tabela"><GridIcon /></button>
                <button type="button" aria-label="Imprimir"><Printer size={18} /></button>
                <button type="button" aria-label="Pasta"><FolderIcon color="#5c9a08" /></button>
                <button type="button" aria-label="Atualizar"><SyncIcon /></button>
                <button type="button" aria-label="Colar"><PasteIcon /></button>
                <ToolSeparator />
                <button type="button" aria-label="Repetir"><RedoIcon /></button>
            </Toolbar>
            <WindowBody>
                <FormSide>
                    <HeadRow>
                        <HeadLabel htmlFor="code" width={80}>Código:</HeadLabel>
                        <TextInput id="code" width={176} defaultValue="ED5" />
                        <SquareButton aria-label="Procurar artigo"><Search size={12} /></SquareButton>
                        <HeadLabel htmlFor="origin" width={237}>Origem:</HeadLabel>
                        <Select id="origin" width={157} value="FABRICO" />
                        <SquareButton aria-label="Procurar origem"><Search size={12} /></SquareButton>
                        <Inactive>
                            <input type="checkbox" />
                            Inativo
                        </Inactive>
                    </HeadRow>
                    <HeadRow>
                        <HeadLabel htmlFor="desc" width={80}>Descrição:</HeadLabel>
                        <TextInput id="desc" width={589} defaultValue="Eletrodomestico 100" />
                        <SquareButton aria-label="Procurar descrição"><Search size={12} /></SquareButton>
                        <StopButtons>
                            <SquareButton size={24} aria-label="Bloquear"><StopIcon /></SquareButton>
                            <SquareButton size={24} aria-label="Bloquear lista"><StopIcon cut /></SquareButton>
                        </StopButtons>
                    </HeadRow>
                    <CheckRow>
                        {kinds.map(name => (
                            <Check key={name} small><input type="checkbox" />{name}</Check>
                        ))}
                    </CheckRow>
                    <Tabs role="tablist">
                        {tabs.map(item => (
                            <Tab key={item.name} width={item.width} disabled={item.disabled}
                                active={tab === item.name} aria-selected={tab === item.name}
                                onClick={() => setTab(item.name)}>
                                <span>{item.name}</span>
                            </Tab>
                        ))}
                    </Tabs>
                    <TechnicalPanel />
                </FormSide>
                <OptionsColumn />
            </WindowBody>
            <Grip width="13" height="13" viewBox="0 0 13 13">
                <path d="M0 13 13 0M5 13l8-8M10 13l3-3" stroke="#a0a0a0" strokeWidth="1.5" />
            </Grip>
        </Window>
    );
}

function App() {
    return (
        <>
            <GlobalStyle />
            <Page>
                <Frame>
                    <SideMenu />
                    <Main>
                        <TitleBar>
                            Mais Ritmo, Lda
                            <WinButtons>
                                <WinButton aria-label="Minimizar"><MinimizeIcon /></WinButton>
                                <WinButton aria-label="Restaurar"><RestoreIcon /></WinButton>
                                <WinButton aria-label="Fechar" close><CloseIcon /></WinButton>
                            </WinButtons>
                        </TitleBar>
                        <MenuBar>
                            {menuItems.map(name => <a key={name} href="#">{name}</a>)}
                        </MenuBar>
                        <ToolStrip />
                        <Desk>
                            <NavigatorPanel />
                            <Splitter />
                            <Workspace>
                                <ArticleWindow />
                            </Workspace>
                        </Desk>
                    </Main>
                </Frame>
            </Page>
        </>
    );
}

export default App;
